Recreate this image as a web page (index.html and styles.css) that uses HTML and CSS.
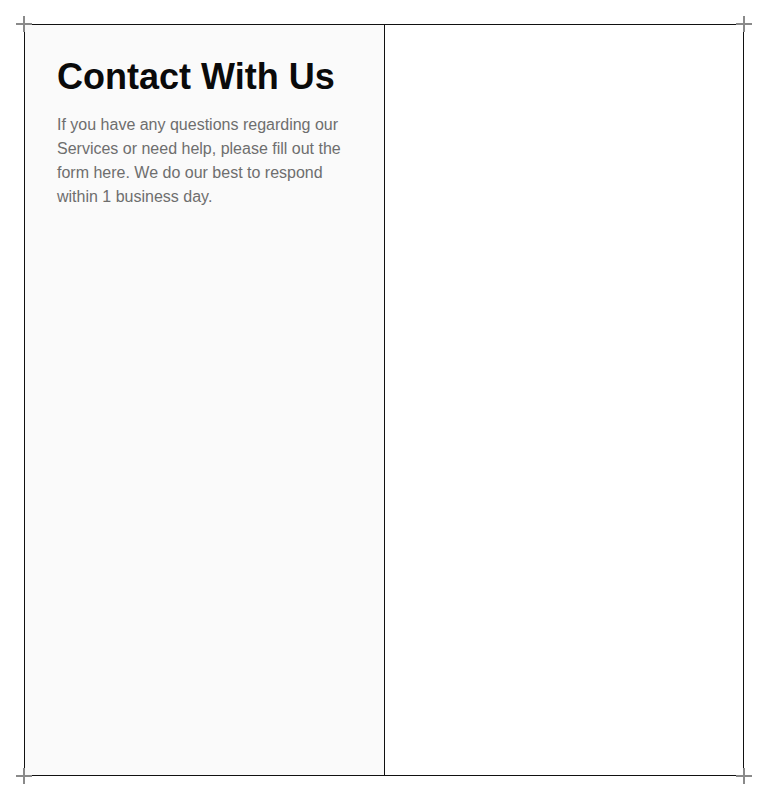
FILE: index.html
```html
<!DOCTYPE html>
<html lang="en">
<head>
<meta charset="utf-8">
<title>Contact With Us</title>
<link rel="stylesheet" href="styles.css">
</head>
<body>
<div class="frame">
  <span class="cross cross-tl"></span>
  <span class="cross cross-tr"></span>
  <span class="cross cross-bl"></span>
  <span class="cross cross-br"></span>
  <section class="info">
    <h1 class="title">Contact With Us</h1>
    <p class="lead">If you have any questions regarding our Services or need help, please fill out the form here. We do our best to respond within 1 business day.</p>
  </section>
  <section class="form-area"></section>
</div>
</body>
</html>
```

FILE: styles.css
```css
html, body {
  margin: 0;
  padding: 0;
  background: #ffffff;
}
body {
  padding: 24px;
  font-family: "Liberation Sans", Arial, sans-serif;
}
.frame {
  position: relative;
  box-sizing: border-box;
  width: 720px;
  height: 752px;
  border: 1px solid #111111;
  display: grid;
  grid-template-columns: 360px 1fr;
}
.info {
  box-sizing: border-box;
  background: #fafafa;
  border-right: 1px solid #111111;
  padding: 32px;
}
.title {
  margin: 0;
  font-size: 36px;
  line-height: 40px;
  font-weight: 700;
  color: #0a0a0a;
}
.lead {
  margin: 16px 0 0 0;
  font-size: 16px;
  line-height: 24px;
  color: #6e6e6e;
  max-width: 296px;
}
.form-area {
  background: #ffffff;
}
.cross {
  position: absolute;
  width: 16px;
  height: 16px;
}
.cross::before,
.cross::after {
  content: "";
  position: absolute;
  background: #8a8a8a;
}
.cross::before {
  left: 0;
  top: 7px;
  width: 16px;
  height: 2px;
}
.cross::after {
  top: 0;
  left: 7px;
  width: 2px;
  height: 16px;
}
.cross-tl { left: -9px; top: -9px; }
.cross-tr { right: -9px; top: -9px; }
.cross-bl { left: -9px; bottom: -9px; }
.cross-br { right: -9px; bottom: -9px; }
```
